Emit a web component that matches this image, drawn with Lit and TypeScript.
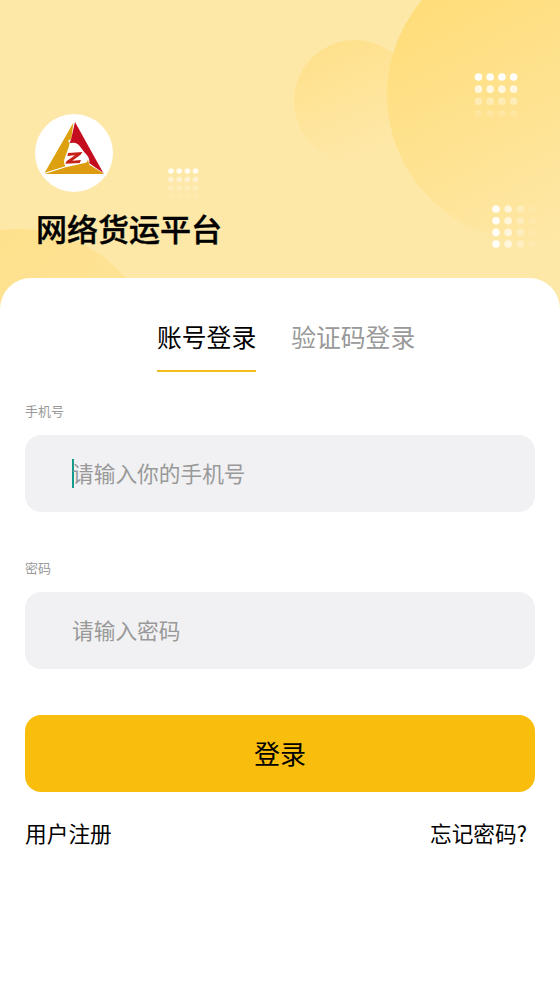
import { LitElement, html, css, svg } from "lit";
import { customElement, property } from "lit/decorators.js";

interface DotGrid {
  x: number;
  y: number;
  step: number;
  r: number;
  fade: "down" | "right";
  levels: number[];
}

const GRIDS: DotGrid[] = [
  { x: 478.5, y: 77, step: 11.7, r: 3.8, fade: "down", levels: [0.97, 0.72, 0.36, 0.15] },
  { x: 496, y: 209, step: 11.7, r: 3.8, fade: "right", levels: [0.94, 0.62, 0.28, 0.09] },
  { x: 171, y: 171, step: 8.2, r: 2.8, fade: "down", levels: [0.85, 0.48, 0.22, 0.07] },
];

@customElement("hero-backdrop")
class HeroBackdrop extends LitElement {
  static styles = css`
    :host { display: block; }
    .art { display: block; width: 560px; height: 310px; }
  `;

  private dots(g: DotGrid) {
    return [0, 1, 2, 3].flatMap((row) =>
      [0, 1, 2, 3].map((col) => svg`<circle
        cx=${g.x + col * g.step * (g.fade === "right" ? 1.04 : 1)}
        cy=${g.y + row * g.step * (g.fade === "down" ? 1.04 : 1)} r=${g.r}
        fill="#fff" fill-opacity=${g.levels[g.fade === "down" ? row : col]} />`)
    );
  }

  render() {
    return html`<svg class="art" viewBox="0 0 560 310">
      <defs>
        <linearGradient id="big" x1="0.2" y1="0.15" x2="0.65" y2="1">
          <stop offset="0" stop-color="#ffdd7a" />
          <stop offset="1" stop-color="#fee8a8" />
        </linearGradient>
        <linearGradient id="small" x1="0.2" y1="0.1" x2="0.6" y2="0.95">
          <stop offset="0" stop-color="#ffe18d" />
          <stop offset="1" stop-color="#fee8a8" />
        </linearGradient>
        <linearGradient id="low" x1="0.2" y1="0" x2="0.8" y2="0.6">
          <stop offset="0" stop-color="#ffe089" />
          <stop offset="1" stop-color="#fee49a" />
        </linearGradient>
      </defs>
      <rect width="560" height="310" fill="#fee8a8" />
      <circle cx="355" cy="101" r="61" fill="url(#small)" />
      <circle cx="533" cy="95" r="146" fill="url(#big)" />
      <circle cx="20" cy="368" r="139" fill="url(#low)" />
      ${GRIDS.map((g) => this.dots(g))}
    </svg>`;
  }
}

@customElement("brand-mark")
class BrandMark extends LitElement {
  static styles = css`
    :host { display: block; }
    .mark { display: block; width: 78px; height: 78px; }
  `;

  render() {
    return html`<svg class="mark" viewBox="0 0 234 234">
      <circle cx="117" cy="117" r="117" fill="#fff" />
      <path d="M115 26 L29 176 L91 157 Q85 147 89 133 L101 100 L104 88 L99 80 L109 74 Z" fill="#dda00f" />
      <path d="M120 24 L205 177 L163 148 Q165 134 155 122 Q147 115 139 103 Q131 88 117 86 L104 87 L109 73 Z" fill="#c50d20" />
      <path d="M29 180 L92 160 L150 147 Q158 144 159 137 L163 152 L208 180 Z" fill="#dd9c0f" />
      <path d="M99 117 L142 114 L137 122 L112 140 L138 138 L134 147 L91 149 L95 141 L120 124 L97 126 Z" fill="#c82218" />
    </svg>`;
  }
}

@customElement("login-field")
class LoginField extends LitElement {
  @property() label = "";
  @property() hint = "";
  @property({ type: Boolean }) active = false;

  static styles = css`
    :host { display: block; }
    .label { display: block; font-size: 13px; line-height: 20px; color: #999; margin-bottom: 14px; }
    .box {
      box-sizing: border-box;
      height: 77px;
      padding-left: 47px;
      border-radius: 16px;
      background: #f1f1f3;
      display: flex;
      align-items: center;
      font-size: 21.7px;
      line-height: 30px;
      color: #999;
    }
    .hint { padding-bottom: 2px; }
    .caret { width: 2px; height: 29px; margin-right: -2px; background: #159b8c; }
  `;

  render() {
    return html`
      <span class="label">${this.label}</span>
      <div class="box">
        ${this.active ? html`<span class="caret"></span>` : null}
        <span class="hint">${this.hint}</span>
      </div>
    `;
  }
}

@customElement("app-root")
class AppRoot extends LitElement {
  static styles = css`
    :host {
      display: block;
      position: relative;
      width: 560px;
      height: 995px;
      overflow: hidden;
      background: #fff;
      color: #000;
      font-family: "Noto Sans CJK SC", sans-serif;
    }
    .backdrop { position: absolute; top: 0; left: 0; }
    .page { position: relative; display: flex; flex-direction: column; height: 100%; }
    .hero { height: 278px; padding: 114px 35px 0; box-sizing: border-box; }
    .title {
      margin: 13px 0 0 1px;
      font-size: 31px;
      line-height: 46px;
      font-weight: 500;
      -webkit-text-stroke: 0.4px #000;
    }
    .sheet {
      flex: 1;
      box-sizing: border-box;
      padding: 38px 25px 0;
      border-radius: 31px 31px 0 0;
      background: #fff;
    }
    .tabs { display: flex; gap: 35px; margin-left: 132px; font-size: 24.8px; line-height: 40px; color: #999; }
    .tab { height: 54px; border-bottom: 2px solid transparent; white-space: nowrap; }
    .selected { color: #000; border-color: #f0bd1c; }
    .phone { margin-top: 29px; }
    .password { margin-top: 46px; }
    .submit {
      display: flex;
      align-items: center;
      justify-content: center;
      width: 100%;
      height: 77px;
      margin-top: 46px;
      padding: 0 0 2px;
      border: 0;
      border-radius: 16px;
      background: #f9be0d;
      color: #000;
      font-family: inherit;
      font-size: 26px;
    }
    .links {
      display: flex;
      justify-content: space-between;
      margin-top: 26px;
      padding-right: 8px;
      font-size: 21.7px;
      line-height: 30px;
    }
  `;

  render() {
    return html`
      <hero-backdrop class="backdrop"></hero-backdrop>
      <div class="page">
        <header class="hero">
          <brand-mark></brand-mark>
          <h1 class="title">网络货运平台</h1>
        </header>
        <main class="sheet">
          <nav class="tabs">
            <span class="tab selected">账号登录</span>
            <span class="tab">验证码登录</span>
          </nav>
          <login-field class="phone" label="手机号" hint="请输入你的手机号" active></login-field>
          <login-field class="password" label="密码" hint="请输入密码"></login-field>
          <button class="submit">登录</button>
          <div class="links">
            <span>用户注册</span>
            <span>忘记密码?</span>
          </div>
        </main>
      </div>
    `;
  }
}
